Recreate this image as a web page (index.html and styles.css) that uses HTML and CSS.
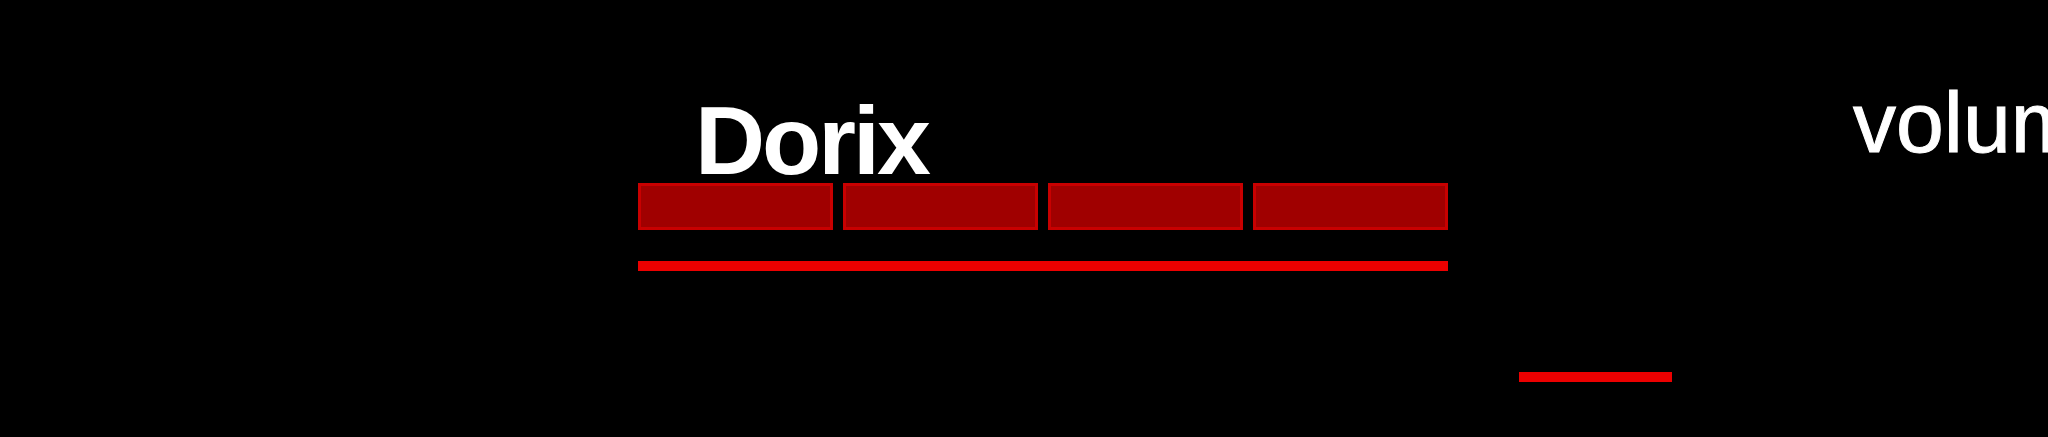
FILE: index.html
```html
<!DOCTYPE html>
<html lang="en">
<head>
<meta charset="utf-8">
<title>Dorix</title>
<link rel="stylesheet" href="styles.css">
</head>
<body>
<div class="page">
  <section class="brand">
    <h1 class="title">Dorix</h1>
    <div class="bars">
      <span class="bar"></span>
      <span class="bar"></span>
      <span class="bar"></span>
      <span class="bar"></span>
    </div>
    <div class="rule"></div>
  </section>
  <div class="mid">
    <div class="dash"></div>
  </div>
  <div class="volume">volume</div>
</div>
</body>
</html>
```

FILE: styles.css
```css
html, body {
  margin: 0;
  padding: 0;
  background: #000;
}
.page {
  width: 2048px;
  height: 437px;
  overflow: hidden;
  display: flex;
  align-items: flex-start;
  background: #000;
  color: #fff;
  font-family: "Liberation Sans", Arial, sans-serif;
}
.brand {
  margin-left: 638px;
  width: 810px;
  padding-top: 101px;
  flex: none;
}
.title {
  margin: 0;
  padding-left: 57px;
  font-size: 97px;
  font-weight: bold;
  line-height: 80px;
  letter-spacing: -3px;
  color: #fff;
}
.bars {
  margin-top: 2px;
  display: grid;
  grid-template-columns: repeat(4, 1fr);
  gap: 10px;
  height: 47px;
}
.bar {
  display: block;
  background: #a00000;
  border: 3px solid #c80000;
}
.rule {
  margin-top: 31px;
  height: 10px;
  background: #ec0000;
}
.mid {
  margin-left: 71px;
  width: 153px;
  padding-top: 372px;
  flex: none;
}
.dash {
  height: 10px;
  background: #ec0000;
}
.volume {
  margin-left: 181px;
  padding-top: 82px;
  font-size: 86px;
  line-height: 80px;
  -webkit-text-stroke: 1px #fff;
  white-space: nowrap;
  flex: none;
}
```
